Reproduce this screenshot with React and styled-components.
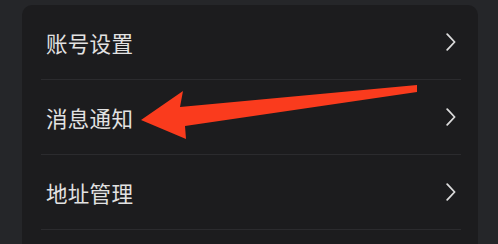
import React from 'react';
import styled, { createGlobalStyle } from 'styled-components';

const GlobalStyle = createGlobalStyle`
  html, body {
    margin: 0;
    padding: 0;
    background: #252629;
    overflow: hidden;
  }
  body {
    font-family: "Noto Sans CJK SC", "Noto Sans", sans-serif;
  }
`;

const items = ['账号设置', '消息通知', '地址管理'];

const App = () => (
  <>
    <GlobalStyle />
    <Page>
      <Card>
        {items.map((label) => (
          <React.Fragment key={label}>
            <Row>
              <Label>{label}</Label>
              <Chevron viewBox="0 0 10 18">
                <path d="M1.2 1.2 L8.6 9 L1.2 16.8" />
              </Chevron>
            </Row>
            <Divider />
          </React.Fragment>
        ))}
        <Arrow viewBox="0 0 456 239">
          <polygon points="119,115 161,86 158,102 395,80 395,87 163,121 164,134" />
        </Arrow>
      </Card>
    </Page>
  </>
);

export default App;

const Page = styled.div`
  height: 244px;
  padding: 5px 20px 0 22px;
  box-sizing: border-box;
  overflow: hidden;
`;

const Card = styled.div`
  position: relative;
  background: #1c1c1e;
  border-radius: 10px 10px 0 0;
  height: 239px;
`;

const Row = styled.div`
  height: 74px;
  display: flex;
  align-items: center;
  justify-content: space-between;
  padding: 0 22px 0 24px;
`;

const Label = styled.span`
  color: #e2e2e2;
  font-size: 21.5px;
  letter-spacing: 0.3px;
  line-height: 1;
  padding-top: 2px;
`;

const Chevron = styled.svg`
  width: 10px;
  height: 18px;
  fill: none;
  stroke: #dcdcdc;
  stroke-width: 1.8;
  stroke-linecap: round;
  stroke-linejoin: round;
`;

const Divider = styled.div`
  height: 1px;
  margin: 0 17px 0 19px;
  background: #2b2b2e;
`;

const Arrow = styled.svg`
  position: absolute;
  left: 0;
  top: 0;
  width: 456px;
  height: 239px;
  pointer-events: none;
  polygon {
    fill: #fa3b1d;
  }
`;
